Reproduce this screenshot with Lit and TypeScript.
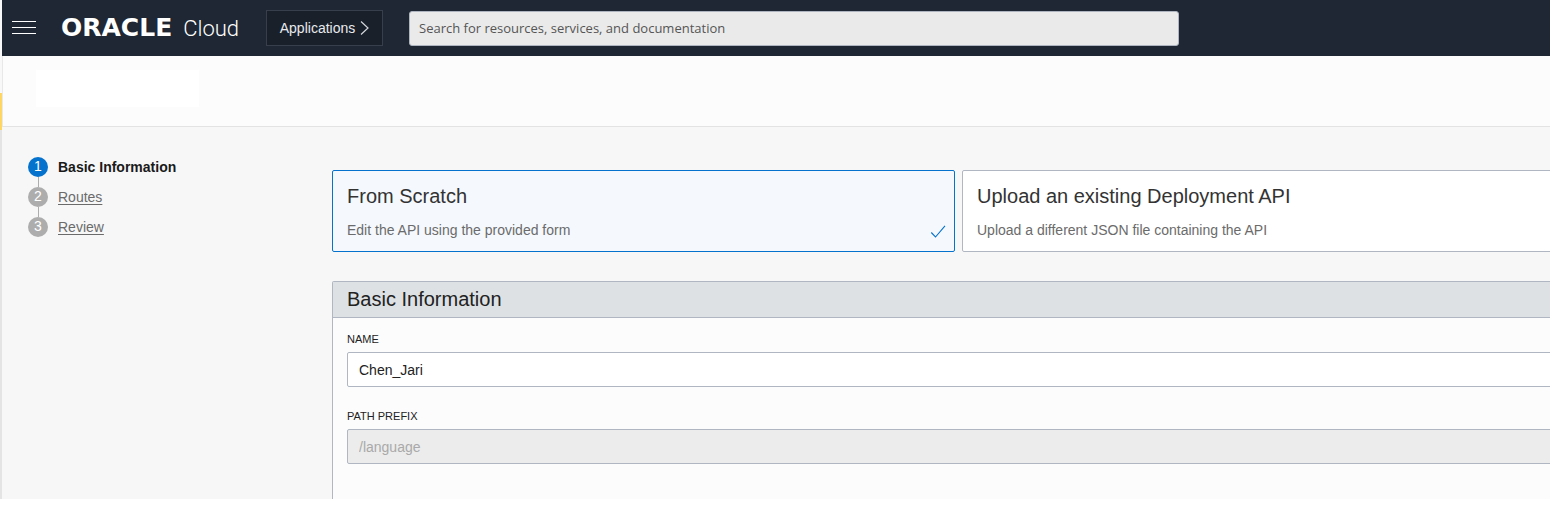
import { LitElement, html, css } from "lit";
import { customElement, state } from "lit/decorators.js";
import { classMap } from "lit/directives/class-map.js";

@customElement("app-header")
class AppHeader extends LitElement {
  static styles = css`
    :host {
      display: flex;
      align-items: center;
      height: 56px;
      padding: 0 10px;
      background: #1e2733;
      font-family: "Liberation Sans", Arial, sans-serif;
      box-sizing: border-box;
    }
    button {
      font: inherit;
      margin: 0;
      cursor: pointer;
    }
    .menu {
      display: flex;
      flex: none;
      padding: 0;
      border: 0;
      background: none;
    }
    .logo {
      display: flex;
      flex: none;
      align-items: baseline;
      gap: 11px;
      width: 205px;
      padding-left: 25px;
      box-sizing: border-box;
      color: #fff;
      line-height: 28px;
      text-decoration: none;
    }
    .brand {
      font-family: "DejaVu Sans", sans-serif;
      font-weight: 700;
      font-size: 25px;
    }
    .product {
      font-family: Roboto, sans-serif;
      font-weight: 300;
      font-size: 22px;
    }
    .apps {
      display: flex;
      flex: none;
      align-items: center;
      justify-content: center;
      gap: 5px;
      width: 117px;
      height: 36px;
      margin-left: 25px;
      padding: 0;
      border: 1px solid #363f4b;
      background: #19202a;
      color: #e8eaed;
      font-size: 14px;
    }
    .search {
      flex: 0 1 770px;
      min-width: 0;
      height: 35px;
      margin-left: 26px;
      padding: 0 9px;
      border: 1px solid #aeb5c0;
      border-radius: 3px;
      background: #eaeaea;
      font-family: "Open Sans", "Noto Sans", sans-serif;
      font-size: 13px;
      box-sizing: border-box;
    }
    .search::placeholder {
      color: #555;
      opacity: 1;
    }
  `;

  render() {
    return html`
      <button class="menu" aria-label="Menu">
        <svg width="24" height="14" viewBox="0 0 24 14" stroke="#fff" stroke-width="1">
          <path d="M0 .5H24M0 6.500H24M0 12.500H24" />
        </svg>
      </button>
      <a class="logo" href="#"><span class="brand">ORACLE</span><span class="product">Cloud</span></a>
      <button class="apps">
        Applications
        <svg width="9" height="16" viewBox="0 0 9 16" fill="none" stroke="#d4d7db" stroke-width="1.200">
          <path d="M1 1.500L8 8L1 14.500" />
        </svg>
      </button>
      <input class="search" type="search" aria-label="Search" placeholder="Search for resources, services, and documentation" />
    `;
  }
}

@customElement("wizard-steps")
class WizardSteps extends LitElement {
  static styles = css`
    :host {
      display: block;
      font-size: 14px;
      line-height: 20px;
    }
    ol {
      display: flex;
      flex-direction: column;
      margin: 0;
      padding: 0;
      list-style: none;
    }
    .step {
      display: grid;
      grid-template-columns: 20px 1fr;
      column-gap: 10px;
      justify-items: start;
    }
    .num {
      width: 20px;
      height: 20px;
      border-radius: 50%;
      background: #adadad;
      color: #fff;
      text-align: center;
      line-height: 19px;
    }
    .step.current .num {
      background: #0572ce;
    }
    .step:not(:last-child)::after {
      content: "";
      grid-column: 1;
      justify-self: center;
      width: 1px;
      height: 10px;
      background: #adadad;
    }
    a {
      color: #6b6b6b;
      text-decoration: underline;
      text-underline-offset: 2px;
    }
    .step.current a {
      color: #1a1a1a;
      font-weight: 700;
      text-decoration: none;
    }
  `;

  private steps = ["Basic Information", "Routes", "Review"];

  render() {
    return html`<ol>
      ${this.steps.map(
        (name, i) => html`<li class=${classMap({ step: true, current: i === 0 })}>
          <span class="num">${i + 1}</span><a href="#">${name}</a>
        </li>`
      )}
    </ol>`;
  }
}

@customElement("app-root")
class AppRoot extends LitElement {
  static styles = css`
    :host {
      display: flex;
      padding: 0 10px 10px 0;
      background: #fff;
      font-family: "Liberation Sans", Arial, sans-serif;
      color: #222;
      overflow: hidden;
    }
    .rail {
      display: flex;
      flex: none;
      flex-direction: column;
      width: 2px;
      background: #e4e4e4;
    }
    .rail-top {
      height: 93px;
      background: #f8f8f8;
    }
    .rail-mark {
      height: 37px;
      background: #fdd663;
    }
    .page {
      flex: 1;
      min-width: 0;
      overflow: hidden;
      background: #f7f7f7;
    }
    .band {
      display: flex;
      padding: 14px 33px 19px;
      border-bottom: 1px solid #e3e3e3;
      border-left: 1px solid #e8e8e8;
      background: #fcfcfc;
    }
    .title {
      width: 163px;
      height: 37px;
      background: #fff;
    }
    .body {
      display: grid;
      grid-template-columns: 304px 1fr;
      margin-right: -35px;
      padding-left: 26px;
    }
    wizard-steps {
      padding-top: 30px;
    }
    main {
      display: flex;
      flex-direction: column;
      gap: 29px;
      min-width: 0;
      padding-top: 43px;
    }
    .cards {
      display: grid;
      grid-template-columns: 1fr 1fr;
      gap: 7px;
    }
    .card {
      display: grid;
      grid-template-columns: 1fr auto;
      row-gap: 12px;
      margin: 0;
      padding: 13px 8px 11px 14px;
      border: 1px solid #b0b7c2;
      border-radius: 2px;
      background: #fff;
      font: inherit;
      text-align: left;
      cursor: pointer;
    }
    .card.selected {
      border-color: #0572ce;
      background: #f5f9fe;
    }
    .card-title {
      grid-column: 1 / -1;
      color: #333;
      font-size: 20px;
      line-height: 24px;
    }
    .card-text {
      color: #6b6b6b;
      font-size: 14px;
      line-height: 20px;
    }
    .check {
      align-self: end;
    }
    .panel {
      border: 1px solid #b0b7c2;
      border-bottom: 0;
      border-radius: 2px 2px 0 0;
      background: #fcfcfc;
    }
    h2 {
      margin: 0;
      padding: 0 14px;
      border-bottom: 1px solid #b0b7c2;
      background: #dde1e4;
      font-size: 20px;
      font-weight: 400;
      line-height: 35px;
    }
    .fields {
      display: flex;
      flex-direction: column;
      gap: 21px;
      padding: 13px 14px 35px;
    }
    .field {
      display: flex;
      flex-direction: column;
      gap: 5px;
    }
    label {
      font-size: 11px;
      line-height: 16px;
    }
    .field input {
      height: 35px;
      padding: 0 11px;
      border: 1px solid #b0b7c2;
      border-radius: 2px;
      background: #fff;
      color: #222;
      font: inherit;
      font-size: 14px;
      box-sizing: border-box;
    }
    .field input:disabled {
      background: #ececec;
      color: #a9a9a9;
    }
  `;

  @state() private selected = 0;

  private cards = [
    { title: "From Scratch", text: "Edit the API using the provided form" },
    { title: "Upload an existing Deployment API", text: "Upload a different JSON file containing the API" },
  ];

  render() {
    return html`
      <div class="rail">
        <div class="rail-top"></div>
        <div class="rail-mark"></div>
      </div>
      <div class="page">
        <app-header></app-header>
        <div class="band"><div class="title"></div></div>
        <div class="body">
          <wizard-steps></wizard-steps>
          <main>
            <div class="cards">
              ${this.cards.map(
                (c, i) => html`<button
                  class=${classMap({ card: true, selected: i === this.selected })}
                  @click=${() => (this.selected = i)}
                >
                  <span class="card-title">${c.title}</span>
                  <span class="card-text">${c.text}</span>
                  ${i === this.selected
                    ? html`<svg class="check" width="16" height="16" viewBox="0 0 16 16" fill="none" stroke="#0572ce" stroke-width="1.100">
                        <path d="M1.300 8.500L5.500 13L15 1.800" />
                      </svg>`
                    : ""}
                </button>`
              )}
            </div>
            <section class="panel">
              <h2>Basic Information</h2>
              <div class="fields">
                <div class="field">
                  <label for="name">NAME</label>
                  <input id="name" type="text" value="Chen_Jari" />
                </div>
                <div class="field">
                  <label for="prefix">PATH PREFIX</label>
                  <input id="prefix" type="text" value="/language" disabled />
                </div>
              </div>
            </section>
          </main>
        </div>
      </div>
    `;
  }
}
